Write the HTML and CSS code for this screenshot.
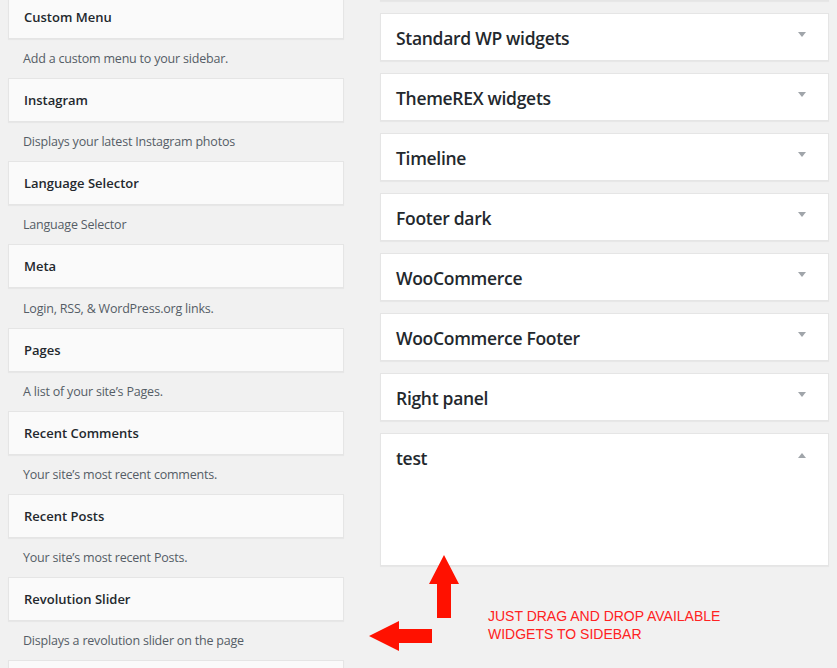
FILE: index.html
```html
<!DOCTYPE html>
<html>
<head>
<meta charset="utf-8">
<link rel="stylesheet" href="styles.css">
</head>
<body>
<div class="page">
  <div class="available">
    <div class="widget first"><div class="widget-top"><h3>Custom Menu</h3></div><div class="desc">Add a custom menu to your sidebar.</div></div>
    <div class="widget"><div class="widget-top"><h3>Instagram</h3></div><div class="desc">Displays your latest Instagram photos</div></div>
    <div class="widget"><div class="widget-top"><h3>Language Selector</h3></div><div class="desc">Language Selector</div></div>
    <div class="widget"><div class="widget-top"><h3>Meta</h3></div><div class="desc">Login, RSS, &amp; WordPress.org links.</div></div>
    <div class="widget"><div class="widget-top"><h3>Pages</h3></div><div class="desc">A list of your site’s Pages.</div></div>
    <div class="widget"><div class="widget-top"><h3>Recent Comments</h3></div><div class="desc">Your site’s most recent comments.</div></div>
    <div class="widget"><div class="widget-top"><h3>Recent Posts</h3></div><div class="desc">Your site’s most recent Posts.</div></div>
    <div class="widget"><div class="widget-top"><h3>Revolution Slider</h3></div><div class="desc">Displays a revolution slider on the page</div></div>
    <div class="widget"><div class="widget-top"></div></div>
  </div>
  <div class="sidebars">
    <div class="sidebar"></div>
    <div class="sidebar"><div class="sidebar-head"><h2>Standard WP widgets</h2><span class="toggle down"></span></div></div>
    <div class="sidebar"><div class="sidebar-head"><h2>ThemeREX widgets</h2><span class="toggle down"></span></div></div>
    <div class="sidebar"><div class="sidebar-head"><h2>Timeline</h2><span class="toggle down"></span></div></div>
    <div class="sidebar"><div class="sidebar-head"><h2>Footer dark</h2><span class="toggle down"></span></div></div>
    <div class="sidebar"><div class="sidebar-head"><h2>WooCommerce</h2><span class="toggle down"></span></div></div>
    <div class="sidebar"><div class="sidebar-head"><h2>WooCommerce Footer</h2><span class="toggle down"></span></div></div>
    <div class="sidebar"><div class="sidebar-head"><h2>Right panel</h2><span class="toggle down"></span></div></div>
    <div class="sidebar open"><div class="sidebar-head"><h2>test</h2><span class="toggle up"></span></div></div>
  </div>
</div>
<svg class="arrows" width="110" height="110" viewBox="0 0 110 110">
  <polygon points="84,5 99,34 91,34 91,68 77,68 77,34 69,34" fill="#ff1100"/>
  <polygon points="9,86 39,71 39,79 72,79 72,93 39,93 39,101" fill="#ff1100"/>
</svg>
<div class="note">JUST DRAG AND DROP AVAILABLE<br>WIDGETS TO SIDEBAR</div>
</body>
</html>
```
FILE: styles.css
```css
html, body {
  margin: 0;
  padding: 0;
  background: #f1f1f1;
  height: 100%;
  overflow: hidden;
}
body {
  font-family: "Open Sans", "Noto Sans", sans-serif;
  color: #23282d;
  position: relative;
}
.page {
  display: flex;
  align-items: flex-start;
  gap: 36px;
  padding-left: 8px;
}
.available {
  width: 336px;
  margin-top: -5px;
  display: flex;
  flex-direction: column;
}
.widget-top {
  height: 42px;
  background: #fafafa;
  border: 1px solid #e5e5e5;
  box-shadow: 0 1px 1px rgba(0,0,0,0.04);
  display: flex;
  align-items: center;
  padding: 0 15px;
}
.widget-top h3 {
  margin: 0;
  font-size: 13px;
  font-weight: 600;
  color: #23282d;
}
.desc {
  height: 39.17px;
  display: flex;
  align-items: center;
  padding-left: 15px;
  font-size: 12.5px;
  letter-spacing: -0.2px;
  color: #555d66;
  box-sizing: border-box;
}
.sidebars {
  width: 449px;
  margin-top: -47px;
  display: flex;
  flex-direction: column;
  gap: 12px;
}
.sidebar {
  background: #fff;
  border: 1px solid #e5e5e5;
  box-shadow: 0 1px 1px rgba(0,0,0,0.04);
  height: 46px;
}
.sidebar.open {
  height: 131px;
}
.sidebar-head {
  display: flex;
  justify-content: space-between;
  align-items: flex-start;
  padding: 0 22px 0 15px;
  height: 46px;
}
.sidebar-head h2 {
  margin: 0;
  padding-top: 1px;
  font-size: 17.5px;
  letter-spacing: -0.3px;
  font-weight: 600;
  line-height: 46px;
  color: #23282d;
}
.toggle {
  width: 0;
  height: 0;
  border-left: 4px solid transparent;
  border-right: 4px solid transparent;
  margin-top: 18px;
}
.toggle.down {
  border-top: 5px solid #a0a5aa;
}
.toggle.up {
  border-bottom: 5px solid #a0a5aa;
  margin-top: 19px;
}
.arrows {
  position: absolute;
  left: 360px;
  top: 550px;
}
.note {
  position: absolute;
  left: 488px;
  top: 607px;
  font-family: "Liberation Sans", Arial, sans-serif;
  font-size: 14px;
  line-height: 18px;
  color: #ff2222;
}
```
